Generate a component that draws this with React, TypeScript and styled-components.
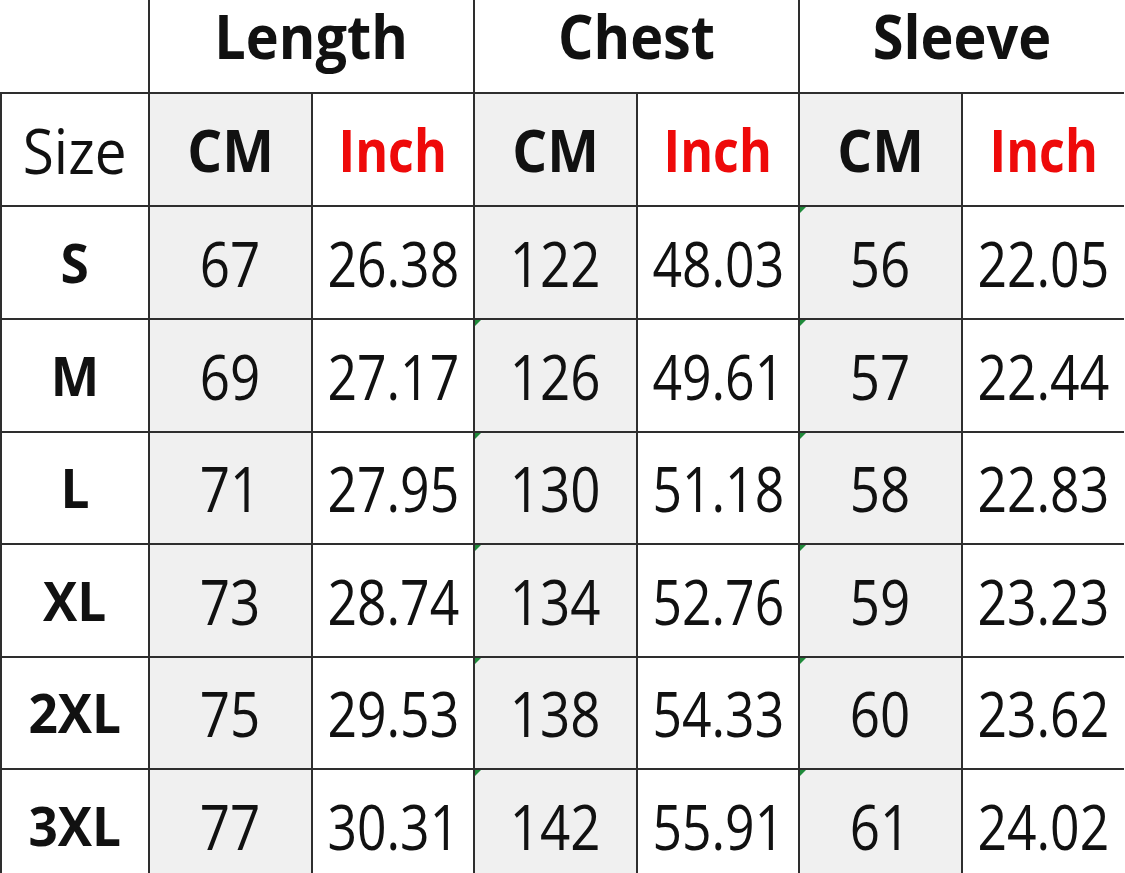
import styled, { createGlobalStyle } from 'styled-components'

const GlobalStyle = createGlobalStyle`
  html, body {
    margin: 0;
    padding: 0;
    background: #ffffff;
    overflow: hidden;
  }
  body {
    font-family: "Open Sans", "Noto Sans", "Liberation Sans", sans-serif;
    color: #111111;
  }
`

const LINE = '#2e2e2e'
const CM_BG = '#f0f0f0'
const RED = '#ee0a0a'

const Sheet = styled.div`
  display: grid;
  grid-template-columns: 148px 163px 162px 163px 162px 163px 163px;
  grid-template-rows: 92px 113px 113px 113px 112px 113px 112px 113px;
  width: 1125px;
  height: 873px;
  overflow: hidden;
`

const Cell = styled.div<{ $gray?: boolean; $span?: number; $noTop?: boolean; $noLeft?: boolean; $top?: boolean }>`
  position: relative;
  display: flex;
  align-items: ${p => (p.$top ? 'flex-start' : 'center')};
  justify-content: center;
  box-sizing: border-box;
  grid-column: span ${p => p.$span ?? 1};
  background: ${p => (p.$gray ? CM_BG : '#ffffff')};
  border-top: ${p => (p.$noTop ? 'none' : `2px solid ${LINE}`)};
  border-left: ${p => (p.$noLeft ? 'none' : `2px solid ${LINE}`)};
`

const Label = styled.span<{ $size: number; $bold?: boolean; $red?: boolean; $squeeze?: number }>`
  display: inline-block;
  font-size: ${p => p.$size}px;
  font-weight: ${p => (p.$bold ? 700 : 400)};
  color: ${p => (p.$red ? RED : '#111111')};
  line-height: 1.2;
  white-space: nowrap;
  transform: scaleX(${p => p.$squeeze ?? 1});
`

const Marker = styled.span`
  position: absolute;
  top: 0;
  left: 0;
  width: 0;
  height: 0;
  border-top: 6px solid #1f8a3a;
  border-right: 6px solid transparent;
`

type Row = { size: string; len: [string, string]; chest: [string, string]; sleeve: [string, string] }

const ROWS: Row[] = [
  { size: 'S', len: ['67', '26.38'], chest: ['122', '48.03'], sleeve: ['56', '22.05'] },
  { size: 'M', len: ['69', '27.17'], chest: ['126', '49.61'], sleeve: ['57', '22.44'] },
  { size: 'L', len: ['71', '27.95'], chest: ['130', '51.18'], sleeve: ['58', '22.83'] },
  { size: 'XL', len: ['73', '28.74'], chest: ['134', '52.76'], sleeve: ['59', '23.23'] },
  { size: '2XL', len: ['75', '29.53'], chest: ['138', '54.33'], sleeve: ['60', '23.62'] },
  { size: '3XL', len: ['77', '30.31'], chest: ['142', '55.91'], sleeve: ['61', '24.02'] },
]

const GROUPS = ['Length', 'Chest', 'Sleeve']

// cm values get the regular squeeze, inch values are a touch narrower
const Num = ({ value, inch }: { value: string; inch?: boolean }) => (
  <Label $size={63} $squeeze={inch ? 0.82 : 0.84}>{value}</Label>
)

export default function App() {
  return (
    <>
      <GlobalStyle />
      <Sheet>
        <Cell $noTop $noLeft />
        {GROUPS.map(g => (
          <Cell key={g} $span={2} $noTop $top>
            <Label $size={60} $bold $squeeze={0.93}>{g}</Label>
          </Cell>
        ))}

        <Cell>
          <Label $size={63} $squeeze={0.9}>Size</Label>
        </Cell>
        {GROUPS.map(g => [
          <Cell key={`${g}-cm`} $gray>
            <Label $size={59} $bold $squeeze={0.93}>CM</Label>
          </Cell>,
          <Cell key={`${g}-in`}>
            <Label $size={59} $bold $red $squeeze={0.85}>Inch</Label>
          </Cell>,
        ])}

        {ROWS.map((r, i) => [
          <Cell key={`${r.size}-s`}>
            <Label $size={53} $bold $squeeze={0.97}>{r.size}</Label>
          </Cell>,
          <Cell key={`${r.size}-lc`} $gray><Num value={r.len[0]} /></Cell>,
          <Cell key={`${r.size}-li`}><Num value={r.len[1]} inch /></Cell>,
          <Cell key={`${r.size}-cc`} $gray>
            {i > 0 && <Marker />}
            <Num value={r.chest[0]} />
          </Cell>,
          <Cell key={`${r.size}-ci`}><Num value={r.chest[1]} inch /></Cell>,
          <Cell key={`${r.size}-sc`} $gray>
            <Marker />
            <Num value={r.sleeve[0]} />
          </Cell>,
          <Cell key={`${r.size}-si`}><Num value={r.sleeve[1]} inch /></Cell>,
        ])}
      </Sheet>
    </>
  )
}
